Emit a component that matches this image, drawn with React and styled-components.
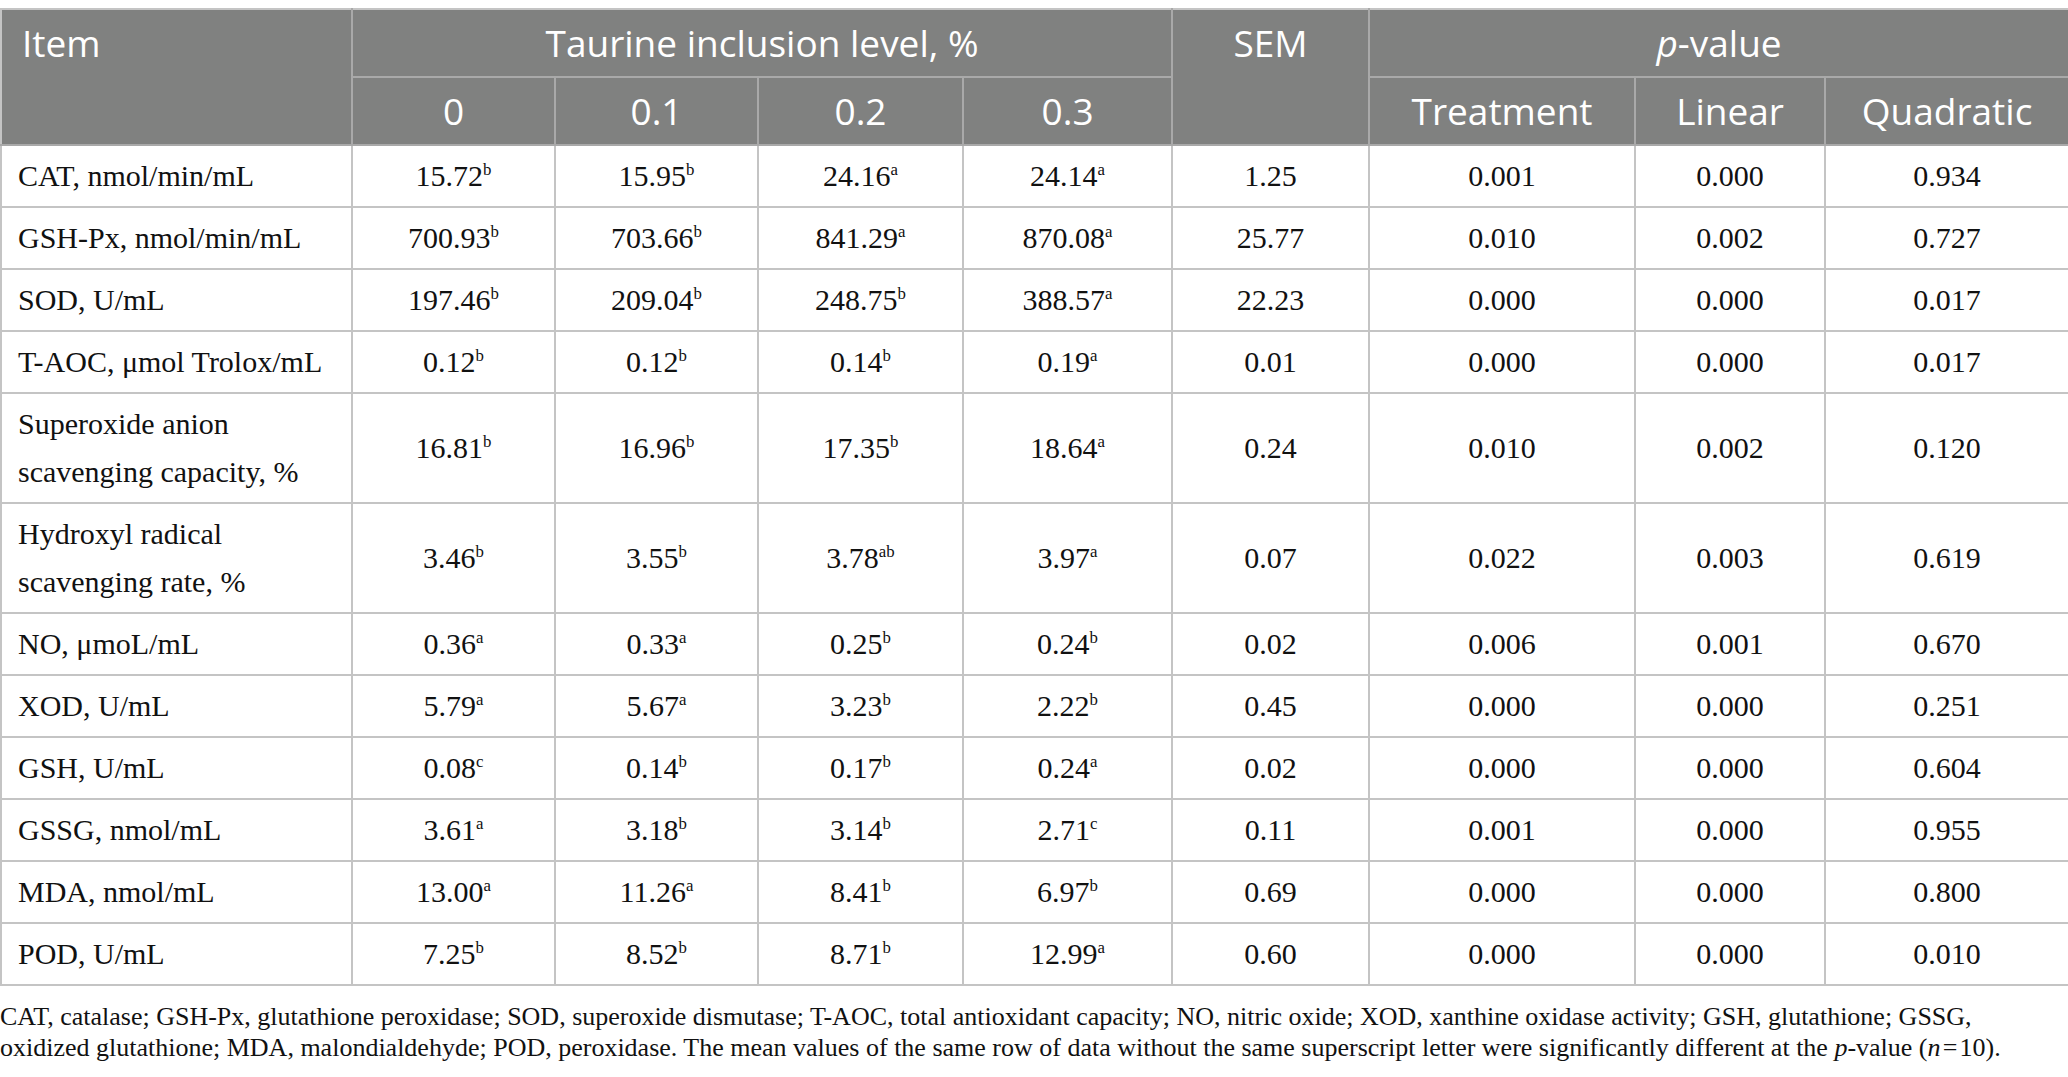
import React from 'react';
import styled, { createGlobalStyle } from 'styled-components';

const GlobalStyle = createGlobalStyle`
  html, body {
    margin: 0;
    padding: 0;
    background: #ffffff;
  }
`;

const Page = styled.div`
  width: 2068px;
  padding-top: 8px;
  font-family: "Liberation Serif", "Times New Roman", serif;
  color: #111111;
`;

const Table = styled.table`
  width: 100%;
  border-collapse: collapse;
  table-layout: fixed;
  border-top: 2px solid #c4c4c4;
  border-bottom: 2px solid #c4c4c4;
`;

const HeadCell = styled.th`
  background: #808180;
  color: #ffffff;
  font-family: "Open Sans", "Noto Sans", sans-serif;
  font-weight: 400;
  font-size: 37px;
  line-height: 50px;
  height: 48px;
  padding: 8px ${props => (props.left ? '20px' : '0')} 8px;
  text-align: ${props => (props.left ? 'left' : 'center')};
  vertical-align: top;
  border: 2px solid #a9a9a9;
  border-top: none;
  &:first-child {
    border-left: 2px solid #c4c4c4;
  }
  &:last-child {
    border-right: 2px solid #c4c4c4;
  }
`;

const Cell = styled.td`
  font-size: 30px;
  line-height: 48px;
  padding: ${props => (props.left ? '6px 8px 6px 16px' : '6px 0')};
  text-align: ${props => (props.left ? 'left' : 'center')};
  vertical-align: middle;
  border: 2px solid #c4c4c4;
`;

const Sup = styled.sup`
  font-size: 0.56em;
  line-height: 0;
  vertical-align: 0.64em;
`;

const Note = styled.p`
  margin: 15px 0 0;
  font-size: 26px;
  line-height: 31px;
  color: #111111;
  padding-right: 20px;
`;

const widths = [351, 203, 203, 205, 209, 197, 266, 190, 244];

const rows = [
  ['CAT, nmol/min/mL', ['15.72', 'b'], ['15.95', 'b'], ['24.16', 'a'], ['24.14', 'a'], '1.25', '0.001', '0.000', '0.934'],
  ['GSH-Px, nmol/min/mL', ['700.93', 'b'], ['703.66', 'b'], ['841.29', 'a'], ['870.08', 'a'], '25.77', '0.010', '0.002', '0.727'],
  ['SOD, U/mL', ['197.46', 'b'], ['209.04', 'b'], ['248.75', 'b'], ['388.57', 'a'], '22.23', '0.000', '0.000', '0.017'],
  ['T-AOC, μmol Trolox/mL', ['0.12', 'b'], ['0.12', 'b'], ['0.14', 'b'], ['0.19', 'a'], '0.01', '0.000', '0.000', '0.017'],
  ['Superoxide anion scavenging capacity, %', ['16.81', 'b'], ['16.96', 'b'], ['17.35', 'b'], ['18.64', 'a'], '0.24', '0.010', '0.002', '0.120'],
  ['Hydroxyl radical scavenging rate, %', ['3.46', 'b'], ['3.55', 'b'], ['3.78', 'ab'], ['3.97', 'a'], '0.07', '0.022', '0.003', '0.619'],
  ['NO, μmoL/mL', ['0.36', 'a'], ['0.33', 'a'], ['0.25', 'b'], ['0.24', 'b'], '0.02', '0.006', '0.001', '0.670'],
  ['XOD, U/mL', ['5.79', 'a'], ['5.67', 'a'], ['3.23', 'b'], ['2.22', 'b'], '0.45', '0.000', '0.000', '0.251'],
  ['GSH, U/mL', ['0.08', 'c'], ['0.14', 'b'], ['0.17', 'b'], ['0.24', 'a'], '0.02', '0.000', '0.000', '0.604'],
  ['GSSG, nmol/mL', ['3.61', 'a'], ['3.18', 'b'], ['3.14', 'b'], ['2.71', 'c'], '0.11', '0.001', '0.000', '0.955'],
  ['MDA, nmol/mL', ['13.00', 'a'], ['11.26', 'a'], ['8.41', 'b'], ['6.97', 'b'], '0.69', '0.000', '0.000', '0.800'],
  ['POD, U/mL', ['7.25', 'b'], ['8.52', 'b'], ['8.71', 'b'], ['12.99', 'a'], '0.60', '0.000', '0.000', '0.010'],
];

const Value = ({ v }) =>
  Array.isArray(v) ? (
    <>
      {v[0]}
      <Sup>{v[1]}</Sup>
    </>
  ) : (
    v
  );

const App = () => {
  return (
    <Page>
      <GlobalStyle />
      <Table>
        <colgroup>
          {widths.map((w, i) => (
            <col key={i} style={{ width: w }} />
          ))}
        </colgroup>
        <thead>
          <tr>
            <HeadCell left rowSpan={2}>Item</HeadCell>
            <HeadCell colSpan={4}>Taurine inclusion level, %</HeadCell>
            <HeadCell rowSpan={2}>SEM</HeadCell>
            <HeadCell colSpan={3}>
              <i>p</i>-value
            </HeadCell>
          </tr>
          <tr>
            <HeadCell>0</HeadCell>
            <HeadCell>0.1</HeadCell>
            <HeadCell>0.2</HeadCell>
            <HeadCell>0.3</HeadCell>
            <HeadCell>Treatment</HeadCell>
            <HeadCell>Linear</HeadCell>
            <HeadCell>Quadratic</HeadCell>
          </tr>
        </thead>
        <tbody>
          {rows.map(row => (
            <tr key={row[0]}>
              <Cell left>{row[0]}</Cell>
              {row.slice(1).map((v, i) => (
                <Cell key={i}>
                  <Value v={v} />
                </Cell>
              ))}
            </tr>
          ))}
        </tbody>
      </Table>
      <Note>
        CAT, catalase; GSH-Px, glutathione peroxidase; SOD, superoxide dismutase; T-AOC, total antioxidant
        capacity; NO, nitric oxide; XOD, xanthine oxidase activity; GSH, glutathione; GSSG, oxidized glutathione;
        MDA, malondialdehyde; POD, peroxidase. The mean values of the same row of data without the same
        superscript letter were significantly different at the <i>p</i>-value (<i>n</i>&#8202;=&#8202;10).
      </Note>
    </Page>
  );
};

export default App;
